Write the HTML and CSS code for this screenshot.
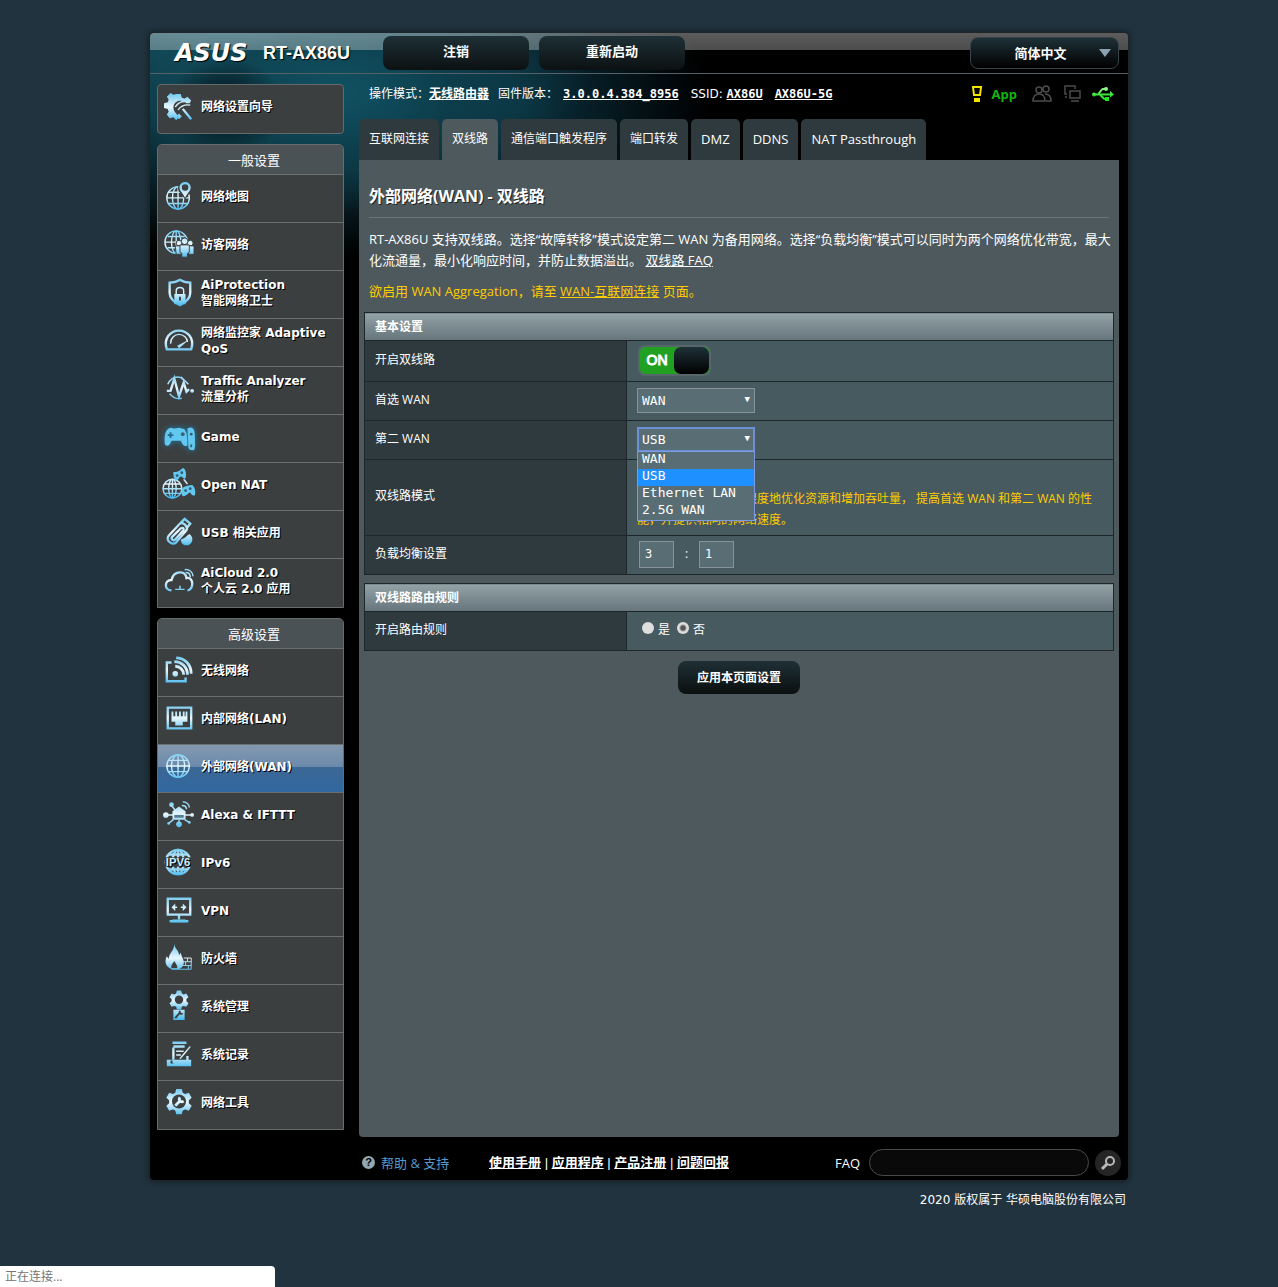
FILE: index.html
```html
<!DOCTYPE html>
<html lang="zh-CN">
<head>
<meta charset="utf-8">
<meta name="viewport" content="width=device-width, initial-scale=1">
<title>RT-AX86U - 双线路</title>
<link rel="stylesheet" href="styles.css">
</head>
<body>
<svg class="defs" width="0" height="0" aria-hidden="true">
  <defs>
    <linearGradient id="ice" gradientUnits="userSpaceOnUse" x1="0" y1="1" x2="0" y2="31">
      <stop offset="0" stop-color="#6cc6ee"/><stop offset=".5" stop-color="#e8f7fe"/><stop offset="1" stop-color="#45b8ee"/>
    </linearGradient>
    <linearGradient id="usb" gradientUnits="userSpaceOnUse" x1="0" y1="0" x2="0" y2="16">
      <stop offset="0" stop-color="#b4ffb4"/><stop offset=".6" stop-color="#2fe02f"/><stop offset="1" stop-color="#12f012"/>
    </linearGradient>
    <path id="gear" d="M13 2h6l1 4 2.500 1.500 4-1.300 3 5.200-3 2.800v3l3 2.800-3 5.200-4-1.300L20 25l-1 4h-6l-1-4-2.500-1.100-4 1.300-3-5.200 3-2.800v-3l-3-2.800 3-5.200 4 1.300L12 6z"/>
  </defs>
</svg>

<div class="router">
  <header class="top">
    <span class="brand">ASUS</span>
    <span class="model">RT-AX86U</span>
    <button class="top-btn" type="button">注销</button>
    <button class="top-btn" type="button">重新启动</button>
    <span class="lang">
      <select aria-label="语言"><option>简体中文</option></select>
    </span>
  </header>

  <div class="columns">
    <nav class="side" aria-label="主菜单">
      <a class="wizard" href="#">
        <svg class="icon" viewBox="0 0 32 32"><path class="f" fill-rule="evenodd" d="M13 2h5l1 4 3 1 3-2 4 4-2 3h-3c-3-4-13-4-14 4 0 4 2 6 4 8l1 4-2 2-3-3-4 1-3-4 2-3-1-3-4-1v-5l4-1 1-3-2-3 4-4 3 2 3-1z"/><path class="s w" d="M20 18l9 11"/><path class="s" d="M12 16c3-5 9-7 16-5M15 19c3-4 7-6 13-5"/><path class="f" d="M13 26l3-3 3 3-3 3z"/></svg>
        <span>网络设置向导</span>
      </a>

      <section class="menu">
        <h2>一般设置</h2>
        <ul>
          <li><a href="#">
            <svg class="icon" viewBox="0 0 32 32"><g class="s"><circle cx="15" cy="18" r="12"/><ellipse cx="15" cy="18" rx="6" ry="12"/><path d="M15 6v24M3 18h24M5 12h20M5 24h20"/></g><path d="M15 8c0-9 15-9 15 0 0 4-5 7-7.500 12C20 15 15 12 15 8z" fill="#3b3f40"/><path class="f" fill-rule="evenodd" d="M16.500 7c0-8 12-8 12 0 0 4-4 6-6 11-2-5-6-7-6-11zm2.500 0a3.500 3.500 0 1 0 7 0 3.500 3.500 0 1 0-7 0z"/></svg>
            <span>网络地图</span></a></li>
          <li><a href="#">
            <svg class="icon" viewBox="0 0 32 32"><g class="s"><circle cx="13" cy="14" r="12"/><ellipse cx="13" cy="14" rx="5" ry="12"/><path d="M13 2v24M1 14h24M4 8h18M4 20h12"/></g><g class="f" stroke="#3b3f40"><circle cx="16" cy="15" r="3"/><circle cx="28" cy="15" r="3"/><path d="M12 18h7v9h-6zM25 18h7v9h-6z"/><circle cx="22" cy="13" r="3.500"/><path d="M17 17h10v8l-2 1v4h-6v-4l-2-1z"/></g></svg>
            <span>访客网络</span></a></li>
          <li><a href="#">
            <svg class="icon" viewBox="0 0 32 32"><path class="s w" d="M17 3c3 2 6 3 11 3v11c0 6-5 10-11 13C11 27 6 23 6 17V6c5 0 8-1 11-3z"/><path class="s" d="M13 18v-3c0-5 8-5 8 0v3"/><path class="f" fill-rule="evenodd" d="M11 18h12v11H11zm5 3v4h2v-4z"/></svg>
            <span>AiProtection<br>智能网络卫士</span></a></li>
          <li><a href="#">
            <svg class="icon" viewBox="0 0 32 32"><path class="s w" d="M3 26c-4-12 4-20 13-20s17 8 13 20z"/><path class="s" d="M7 20c0-6 4-10 9-10s9 4 9 8"/><path class="f" d="M14 22l12-6-10 9z"/></svg>
            <span>网络监控家 Adaptive QoS</span></a></li>
          <li><a href="#">
            <svg class="icon" viewBox="0 0 32 32"><path class="s" d="M4 12c3-6 8-9 14-7l5 4M6 22c3 4 8 6 13 5M18 4l8 8"/><path class="s w" d="M3 19h4l4-13 5 19 5-15 3 10 2-2h1"/><circle class="f" cx="30" cy="19" r="2"/></svg>
            <span>Traffic Analyzer<br>流量分析</span></a></li>
          <li><a href="#">
            <svg class="icon glow" viewBox="0 0 32 32"><g class="c" fill-rule="evenodd"><path d="M5 8c3-2 4 0 6 0s4-2 8 0c4 0 6 4 6 18-3 2-5 0-7-5H8c-2 5-4 7-7 4C0 18 1 10 5 8zm1 4v2H4v2h2v2h2v-2h2v-2H8v-2z"/><path d="M25 8c6-3 8 1 8 9s1 16-3 14c-4 0-4-3-4-5z"/></g><g fill="#3b5f70"><circle cx="20" cy="14" r="2"/><circle cx="29" cy="14" r="1.500"/><path d="M28 25h2v3h-2z"/></g></svg>
            <span>Game</span></a></li>
          <li><a href="#">
            <svg class="icon" viewBox="0 0 32 32"><g class="s"><circle cx="9" cy="21" r="10"/><ellipse cx="9" cy="21" rx="4" ry="10"/><path d="M9 11v20M-1 21h20M1 16h16M1 26h16M21 11l4 5"/></g><g class="c"><path d="M10 3c4 1 7-1 10-4 4 1 4 8 3 11-3 1-3-2-5-2s-2 4-5 4c-3-1-3-6-3-9zM20 20c3-2 7-3 10-3 3 2 4 7 3 11-3 1-4-1-5-3-2 0-4 4-8 4-2-2-2-6 0-9z"/></g><g fill="#315c70"><circle cx="14" cy="7" r="1.500"/><circle cx="19" cy="4" r="1.500"/><circle cx="23" cy="23" r="1.500"/><circle cx="28" cy="21" r="1.500"/></g></svg>
            <span>Open NAT</span></a></li>
          <li><a href="#">
            <svg class="icon" viewBox="0 0 32 32"><g class="s w"><path d="M5 20L17 7c3-2 9 3 7 7L13 27c-4 4-12-2-8-7z"/><path d="M9 21l9-9c3-1 4 1 2 3l-8 9c-3 2-5-1-3-3zM18 6l4-4 6 5-4 5"/></g><path class="f" d="M18 24c4-1 6-4 9-6 5 3 4 10-1 12-4 1-8-1-8-6z"/></svg>
            <span>USB 相关应用</span></a></li>
          <li><a href="#">
            <svg class="icon" viewBox="0 0 32 32"><path class="s w" d="M8 27c-8 0-8-11 0-11 2-10 15-11 16-2 8-2 8 13 1 13"/><path class="s" d="M12 26h10M17 22v4M23 8c3 0 5 2 5 5M22 5c5-1 9 3 9 7"/></svg>
            <span>AiCloud 2.0<br>个人云 2.0 应用</span></a></li>
        </ul>
      </section>

      <section class="menu">
        <h2>高级设置</h2>
        <ul>
          <li><a href="#">
            <svg class="icon" viewBox="0 0 32 32"><path class="s w" d="M8 8H3v20h20v-4"/><circle class="f" cx="12" cy="20" r="3"/><path class="s x" d="M12 12c5 0 9 4 9 9M11 7c8 0 14 6 14 14M13 3c9 0 16 7 16 17"/></svg>
            <span>无线网络</span></a></li>
          <li><a href="#">
            <svg class="icon" viewBox="0 0 32 32"><path class="s w" d="M4 5h25v22H4z"/><path class="f" fill-rule="evenodd" d="M8 9h2v5h2V9h2v5h2V9h2v5h2V9h2v5h1V9h2v11h-5v4H12v-4H8z"/></svg>
            <span>内部网络(LAN)</span></a></li>
          <li class="current"><a href="#" aria-current="page">
            <svg class="icon" viewBox="0 0 32 32"><g class="s"><circle cx="15" cy="16" r="12"/><ellipse cx="15" cy="16" rx="7" ry="12"/><path d="M15 4v24M3 16h24M5 10h20M5 22h20"/></g></svg>
            <span>外部网络(WAN)</span></a></li>
          <li><a href="#">
            <svg class="icon" viewBox="0 0 32 32"><g class="f"><path d="M9 13l7-5 7 5v9H9z"/><circle cx="2" cy="17" r="3"/><circle cx="30" cy="17" r="2"/><circle cx="8" cy="6" r="2.500"/><circle cx="16" cy="27" r="3"/><circle cx="5" cy="26" r="1.500"/><circle cx="27" cy="25" r="1.500"/></g><path class="s" d="M3 17h26M8 7l4 5M16 22v4M5 26l5-4M27 25l-5-3M19 7c3 0 5 1 5 4M20 3c4 0 7 3 7 6"/><path d="M11 17h10v3H11z" fill="#557e90"/></svg>
            <span>Alexa &amp; IFTTT</span></a></li>
          <li><a href="#">
            <svg class="icon" viewBox="0 0 32 32"><g class="s w"><circle cx="15" cy="16" r="13"/><ellipse cx="15" cy="16" rx="6" ry="13"/><path d="M15 3v26M5 8h20M5 24h20"/></g><path d="M1 11h29v10H1z" fill="#3b3f40"/><text class="glyph" x="15" y="20" text-anchor="middle">IPV6</text></svg>
            <span>IPv6</span></a></li>
          <li><a href="#">
            <svg class="icon" viewBox="0 0 32 32"><path class="s w" d="M4 4h24v17H4zM16 21v5M6 28h20"/><path class="s" d="M10 13h4M18 13h4"/><path class="f" d="M8 13l4-4v8zM24 13l-4-4v8zM9 26h14v3H9z"/></svg>
            <span>VPN</span></a></li>
          <li><a href="#">
            <svg class="icon" viewBox="0 0 32 32"><path class="f" fill-rule="evenodd" d="M11 1c1 6 5 7 5 12l2-3c0 4 4 8 3 12-1 4-4 6-7 6H9c-7-2-9-8-6-14l2 3c0-6 6-9 6-16zm0 18c-1 3-4 4-3 8h6c1-3-2-5-3-8z"/><path class="s thin" d="M8 28h21V16h-8M20 20h9M20 24h9M25 16v4M23 20v4M26 24v4"/></svg>
            <span>防火墙</span></a></li>
          <li><a href="#">
            <svg class="icon" viewBox="0 0 32 32"><g transform="translate(4 -2) scale(.75)"><use href="#gear" class="f"/><circle cx="16" cy="15" r="6" fill="#3b3f40"/></g><path class="f" d="M10 20h12v11H10z"/><path d="M12 29l5-6M17 21c-1 3 1 4 3 3" fill="none" stroke="#3b3f40" stroke-width="2"/></svg>
            <span>系统管理</span></a></li>
          <li><a href="#">
            <svg class="icon" viewBox="0 0 32 32"><path class="s w" d="M9 4h15M10 8h12M10 9v13M9 24h17M25 18v6"/><path class="s" d="M13 13h8M13 17h5M28 8L17 21"/><path class="f" fill-rule="evenodd" d="M3 22h26v7H3zm4 1v3h3v-3z"/></svg>
            <span>系统记录</span></a></li>
          <li><a href="#">
            <svg class="icon" viewBox="0 0 32 32"><use href="#gear" class="f"/><circle cx="16" cy="15.500" r="7.500" fill="#3b3f40"/><path class="s x" d="M12 20l5-5M17 11c-2 3 1 6 4 4"/></svg>
            <span>网络工具</span></a></li>
        </ul>
      </section>
    </nav>

    <div class="content">
      <div class="info">
        <span>操作模式：<a href="#">无线路由器</a></span>
        <span>固件版本：<a class="mono far" href="#">3.0.0.4.384_8956</a></span>
        <span class="ssid">SSID: <a class="mono" href="#">AX86U</a></span>
        <a class="mono" href="#">AX86U-5G</a>
        <span class="status">
          <svg width="12" height="18" viewBox="0 0 12 18" fill="none" stroke="#f4e400" stroke-width="2"><path d="M2 2h8L9 10H3zM4 14h4v2H4z"/></svg>
          <a class="app" href="#">App</a>
          <svg width="20" height="18" viewBox="0 0 20 18" fill="none" stroke="#4c4c4c" stroke-width="1.500"><circle cx="7" cy="5" r="3"/><circle cx="14" cy="4" r="3"/><path d="M1 16c0-5 3-7 6-7s6 2 6 7zM13 9c4 0 6 3 6 7h-5"/></svg>
          <svg width="18" height="18" viewBox="0 0 18 18" fill="none" stroke="#4c4c4c" stroke-width="1.500"><path d="M12 4V1H2v8h2M2 12h2M7 6h10v7H7zM8 16h8"/></svg>
          <svg width="22" height="16" viewBox="0 0 22 16" fill="none" stroke="url(#usb)" stroke-width="2"><path d="M1 8.500h18M6 8c2-1 3-5 5-5h3M8 9c2 1 3 4 5 4h2"/><g fill="url(#usb)" stroke="none"><path d="M18 5l4 3.500-4 3zM13 11h4v4h-4z"/><circle cx="2" cy="8.500" r="2"/><circle cx="14" cy="3" r="2"/></g></svg>
        </span>
      </div>

      <nav class="tabs" aria-label="外部网络">
        <a href="#">互联网连接</a>
        <a class="active" href="#" aria-current="page">双线路</a>
        <a href="#">通信端口触发程序</a>
        <a href="#">端口转发</a>
        <a class="latin" href="#">DMZ</a>
        <a class="latin" href="#">DDNS</a>
        <a class="latin" href="#">NAT Passthrough</a>
      </nav>

      <main class="panel">
        <h1>外部网络(WAN) - 双线路</h1>
        <p class="intro">RT-AX86U 支持双线路。选择“故障转移”模式设定第二 WAN 为备用网络。选择“负载均衡”模式可以同时为两个网络优化带宽，最大化流通量，最小化响应时间，并防止数据溢出。 <a href="#">双线路 FAQ</a></p>
        <p class="notice">欲启用 WAN Aggregation，请至 <a href="#">WAN-互联网连接</a> 页面。</p>

        <form>
          <table class="settings">
            <colgroup><col class="names"><col></colgroup>
            <thead><tr><th colspan="2" scope="colgroup">基本设置</th></tr></thead>
            <tbody>
              <tr class="tall"><th scope="row"><label for="dual">开启双线路</label></th>
                <td><label class="switch"><input type="checkbox" id="dual" checked><span class="on">ON</span><span class="knob"></span></label></td></tr>
              <tr><th scope="row"><label for="first">首选 WAN</label></th>
                <td><span class="pick"><select id="first"><option>WAN</option></select></span></td></tr>
              <tr><th scope="row"><label for="second">第二 WAN</label></th>
                <td><span class="pick open"><select id="second"><option>USB</option></select>
                  <ul class="choices"><li>WAN</li><li class="chosen">USB</li><li>Ethernet LAN</li><li>2.5G WAN</li></ul></span></td></tr>
              <tr><th scope="row"><label for="mode">双线路模式</label></th>
                <td class="mode"><span class="pick"><select id="mode"><option>负载均衡</option></select></span>
                  <p>负载均衡模式能最大限度地优化资源和增加吞吐量， 提高首选 WAN 和第二 WAN 的性能，并提供相同的网络速度。</p></td></tr>
              <tr><th scope="row"><label for="ratio">负载均衡设置</label></th>
                <td><span class="ratio"><input type="text" id="ratio" value="3"><span>:</span><input type="text" aria-label="第二 WAN 比例" value="1"></span></td></tr>
            </tbody>
          </table>

          <table class="settings">
            <colgroup><col class="names"><col></colgroup>
            <thead><tr><th colspan="2" scope="colgroup">双线路路由规则</th></tr></thead>
            <tbody>
              <tr><th scope="row">开启路由规则</th>
                <td><span class="radios"><label><input type="radio" name="rule">是</label><label><input type="radio" name="rule" checked>否</label></span></td></tr>
            </tbody>
          </table>
          <button class="apply" type="submit">应用本页面设置</button>
        </form>
      </main>
    </div>
  </div>

  <footer class="bottom">
    <a class="help" href="#"><span class="mark">?</span>帮助 &amp; 支持</a>
    <span class="links"><a href="#">使用手册</a> | <a href="#">应用程序</a> | <a href="#">产品注册</a> | <a href="#">问题回报</a></span>
    <span class="faq">
      <label for="faq">FAQ</label>
      <input type="text" id="faq">
      <button type="button" aria-label="搜索"><svg width="16" height="16" viewBox="0 0 16 16" fill="none" stroke="#b8b8b8" stroke-width="2"><circle cx="10" cy="6" r="4"/><path d="M7 9l-5 5" stroke-width="3"/></svg></button>
    </span>
  </footer>
</div>
<p class="copyright">2020 版权属于 华硕电脑股份有限公司</p>
<div class="loading" role="status">正在连接...</div>
</body>
</html>
```
FILE: styles.css
```css
* { box-sizing: border-box; }

body {
  margin: 0;
  padding-top: 32px;
  background: #21333e;
  color: #fff;
  font: 12px/16px "Open Sans", "Noto Sans CJK SC", sans-serif;
}

h1, h2, p, ul { margin: 0; padding: 0; }
ul { list-style: none; }
a { color: inherit; }
button, input, select { font: inherit; color: inherit; margin: 0; }
.defs { position: absolute; }

.router {
  max-width: 980px;
  margin: 0 auto;
  border: 1px solid #1d262b;
  border-radius: 5px;
  background:
    radial-gradient(ellipse 60px 50px at 75px 75px, #03181fdd 30%, transparent),
    radial-gradient(ellipse 220px 120px at 190px 60px, #105162 0, #0d3f4dcc 50%, transparent),
    radial-gradient(ellipse 330px 230px at 120px 0, #1b6475 0, #0f3c49 50%, transparent 100%),
    radial-gradient(ellipse 200px 150px at 360px 70px, #0a3240, transparent),
    #000;
  box-shadow: 0 0 6px #0008;
  overflow: hidden;
}

/* Top bar */
.top {
  display: flex;
  align-items: center;
  height: 41px;
  padding: 0 9px 0 25px;
  border-bottom: 1px solid #566067;
  background: linear-gradient(#ffffff5c, #ffffff4c) 0 0 / 100% 17px no-repeat;
}
.brand {
  width: 88px;
  font: italic bold 24px/24px "DejaVu Sans", sans-serif;
  text-shadow: 1px 1px 1px #000;
}
.model {
  width: 120px;
  font: bold 18px/24px "Liberation Sans", sans-serif;
  text-shadow: 1px 1px 1px #000;
}
.top-btn {
  width: 146px;
  height: 34px;
  margin-right: 10px;
  padding: 0 0 4px;
  border: 0;
  border-radius: 8px;
  background: linear-gradient(#1e3036, #0c1112);
  font-size: 13px;
  font-weight: bold;
}
.lang { position: relative; margin-left: auto; }
.lang select {
  width: 149px;
  height: 32px;
  padding: 0 8px 0 0;
  appearance: none;
  border: 1px solid #36444a;
  border-radius: 8px;
  background: linear-gradient(#1f3138, #000);
  font-size: 13px;
  font-weight: bold;
  text-align-last: center;
}
.lang::after {
  content: "";
  position: absolute;
  right: 8px;
  top: 12px;
  border: 6px solid transparent;
  border-top: 8px solid #8ba3b0;
  border-bottom: 0;
  pointer-events: none;
}

.columns { display: flex; gap: 15px; padding: 0 9px 0 7px; }

/* Side menu */
.side {
  display: flex;
  flex-direction: column;
  gap: 10px;
  width: 187px;
  padding: 10px 0 7px;
  font: bold 12px/16px "DejaVu Sans", "Noto Sans CJK SC", sans-serif;
  text-shadow: 1px 1px 0 #000;
}
.side a {
  display: flex;
  align-items: center;
  gap: 6px;
  padding: 0 5px 4px;
  text-decoration: none;
}
.wizard {
  height: 50px;
  border: 1px solid #66696a;
  border-radius: 4px;
  background: #3b3f40;
}
.icon { flex: none; width: 32px; height: 30px; margin-bottom: 1px; overflow: visible; }
.menu { border: 1px solid #686c6d; border-radius: 5px 5px 0 0; background: #3b3f40; }
.menu h2 {
  height: 30px;
  border-bottom: 1px solid #6b6f70;
  border-radius: 4px 4px 0 0;
  background: #4b5256;
  padding-left: 7px;
  font: 13px/30px "Noto Sans CJK SC", sans-serif;
  text-align: center;
  text-shadow: none;
}
.menu li { height: 48px; border-bottom: 1px solid #6b6f70; }
.menu li:last-child { border-bottom: 0; }
.menu li a { height: 47px; }
.menu .current { background: linear-gradient(#8499af, #6b8aab 46%, #3b6794 47%, #3168a0); }

.f { fill: url(#ice); }
.s { fill: none; stroke: url(#ice); stroke-width: 1.5; }
.w { stroke-width: 2.5; }
.x { stroke-width: 3; }
.thin { stroke-width: 1; }
.c { fill: #63c8f0; }
.glow { filter: drop-shadow(0 0 3px #1c7daa); }
.glyph { font: bold 12px "Liberation Sans", sans-serif; fill: #cdefff; }

/* Status line and tabs */
.content { display: flex; flex-direction: column; flex: 1; min-width: 0; }
.info { display: flex; align-items: center; gap: 9px; height: 40px; padding-left: 10px; }
.info a { font-weight: bold; }
.info .mono { font: bold 12px/16px "DejaVu Sans Mono", monospace; }
.info .far { margin: 0 3px 0 5px; }
.ssid { margin-right: 3px; font-family: "DejaVu Sans", sans-serif; }
.latin { font-size: 13px; }
.status { display: flex; align-items: center; gap: 11px; margin-left: auto; padding-right: 5px; }
.status .app { color: #11b511; text-decoration: none; font-size: 13px; margin: 0 4px 0 -2px; }

.tabs { display: flex; gap: 3px; margin-top: 5px; }
.tabs a {
  height: 41px;
  padding: 0 10px;
  border-radius: 5px 5px 0 0;
  background: #2f3a3e;
  line-height: 40px;
  text-decoration: none;
  white-space: nowrap;
}
.tabs .active { background: #4d595d; }

/* Settings panel */
.panel { flex: 1; padding: 25px 5px; border-radius: 0 0 4px 4px; background: #4d595d; }
.panel h1 {
  margin: 0 5px 11px;
  padding-bottom: 9px;
  border-bottom: 1px solid #6b7478;
  font-size: 16px;
  line-height: 23px;
  text-shadow: 1px 1px 0 #222;
}
.intro, .notice { margin-left: 5px; font-size: 13px; line-height: 21px; }
.notice { margin-top: 10px; margin-bottom: 10px; color: #fc0; }

.settings {
  width: 100%;
  margin-bottom: 8px;
  border-collapse: collapse;
  table-layout: fixed;
}
.settings .names { width: 262px; }
.settings th, .settings td { height: 39px; padding: 0 10px; border: 1px solid #1d272a; text-align: left; }
.settings thead th { height: 28px; background: linear-gradient(#93a2a7, #65757b); }
.settings tbody th { padding-bottom: 3px; background: #2f3a3e; font-weight: normal; }
.settings td { padding-bottom: 2px; background: #475a5f; }
.settings .tall th, .settings .tall td { height: 41px; }

.switch {
  display: flex;
  width: 73px;
  height: 31px;
  margin-left: 1px;
  border: 2px solid #56666b;
  border-radius: 7px;
  background: #22a022;
}
.switch input { position: absolute; opacity: 0; }
.switch .on { flex: 1; font: 14px/27px "Liberation Sans", sans-serif; text-align: center; -webkit-text-stroke: 1px #fff; }
.switch .knob { width: 35px; border-radius: 7px; background: linear-gradient(#1f3138, #000); }

.pick { position: relative; display: block; width: 118px; font: 13px/17px "DejaVu Sans Mono", monospace; }
.pick select {
  display: block;
  width: 100%;
  height: 25px;
  padding: 0 4px;
  appearance: none;
  border: 1px solid #86949a;
  border-radius: 0;
  background: #596d74;
}
.pick::after { content: "▼"; position: absolute; right: 5px; top: 3px; font-size: 9px; pointer-events: none; }
.open select { border: 2px solid #6c8fd6; padding: 0 3px; }
.choices {
  position: absolute;
  z-index: 2;
  top: 24px;
  left: 0;
  width: 118px;
  border: 1px solid #7b9ae0;
  background: #596d74;
}
.choices li { height: 17px; padding-left: 4px; line-height: 13px; }
.choices .chosen { background: #1e90ff; }

.settings .mode { padding-top: 3px; padding-bottom: 5px; }
.mode p { color: #fc0; line-height: 21px; }

.ratio { display: flex; align-items: center; margin-left: 2px; }
.ratio input {
  width: 35px;
  height: 27px;
  padding: 0 5px;
  border: 1px solid #86949a;
  background: #596d74;
  font: 12px/16px "DejaVu Sans Mono", monospace;
}
.ratio span { width: 25px; text-align: center; }

.radios { display: flex; gap: 7px; margin-left: 5px; }
.radios label { display: flex; align-items: center; gap: 4px; }
.radios input {
  width: 12px;
  height: 12px;
  margin-bottom: 4px;
  appearance: none;
  border-radius: 50%;
  background: #dedede;
}
.radios input:checked { background: radial-gradient(circle, #555 2px, #dedede 4px); }

.apply {
  display: block;
  width: 122px;
  height: 33px;
  margin: 10px auto 0;
  padding: 0;
  border: 0;
  border-radius: 8px;
  background: linear-gradient(#1e3036, #0c0f10);
  font-weight: bold;
}

/* Footer */
.bottom { display: flex; align-items: center; height: 43px; padding: 8px 7px 0 212px; font-size: 13px; }
.help { display: flex; align-items: center; gap: 6px; width: 127px; color: #569ac9; text-decoration: none; }
.mark {
  width: 13px;
  height: 13px;
  border-radius: 50%;
  background: #93a9b1;
  color: #000;
  font: bold 11px/13px "Liberation Sans", sans-serif;
  text-align: center;
}
.links { font-family: "Liberation Sans", "Noto Sans CJK SC", sans-serif; }
.links a { font-weight: bold; }
.faq { display: flex; align-items: center; gap: 6px; margin-left: auto; }
.faq input {
  width: 220px;
  height: 27px;
  margin-left: 3px;
  padding: 0 12px;
  border: 1px solid #4a4a4a;
  border-radius: 14px;
  background: #090909;
}
.faq button {
  display: grid;
  place-items: center;
  width: 26px;
  height: 26px;
  padding: 0;
  border: 0;
  border-radius: 50%;
  background: #252525;
}

.copyright {
  max-width: 980px;
  margin: 11px auto 0;
  padding-right: 3px;
  font-family: "DejaVu Sans", "Noto Sans CJK SC", sans-serif;
  text-align: right;
}

.loading {
  position: fixed;
  left: 0;
  bottom: 0;
  width: 275px;
  height: 21px;
  padding-left: 5px;
  border-radius: 0 4px 0 0;
  background: #fff;
  color: #757575;
  line-height: 21px;
}
```
